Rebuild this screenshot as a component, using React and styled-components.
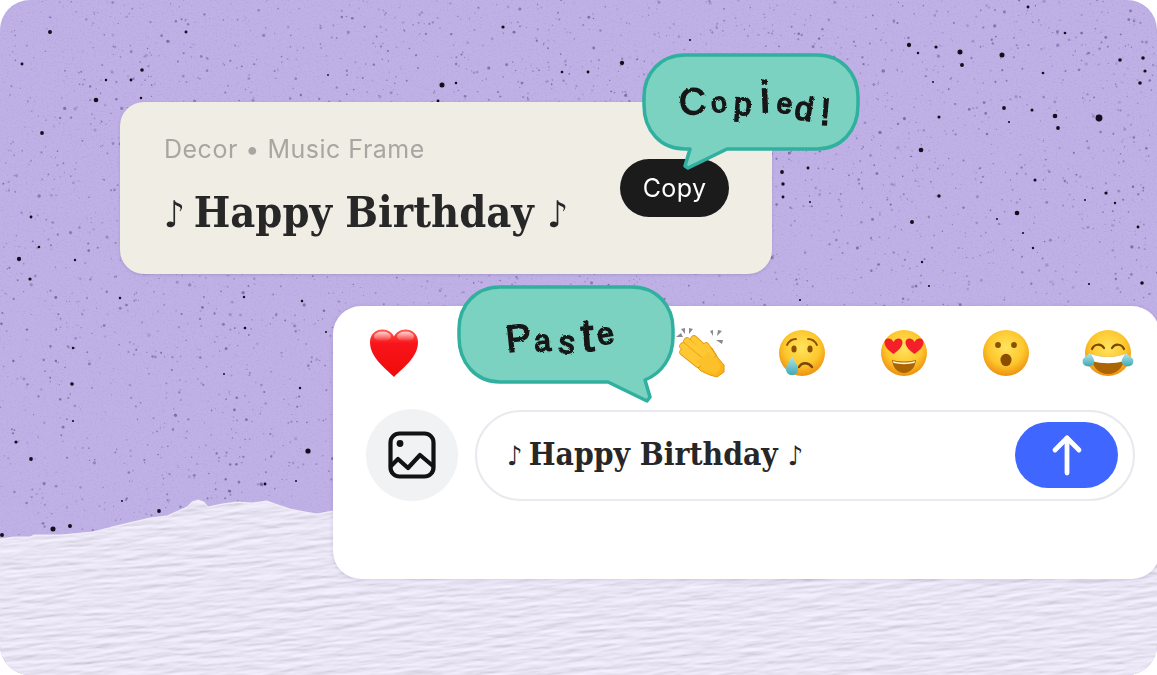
import React from "react";
import styled, { createGlobalStyle } from "styled-components";

const GlobalStyle = createGlobalStyle`
  html, body {
    margin: 0;
    padding: 0;
    background: #ffffff;
  }
`;

const TORN_EDGE =
  "M0 540 L14 538 L30 538 L34 536 L60 536 L93 533 L112 528 L133 523 L150 519 L167 517 L178 512 L187 508 L192 503 L198 501 L204 503 L208 508 L222 505 L237 503 L252 504 L267 502 L278 506 L290 510 L305 513 L317 515 L333 512 L1157 512 V675 H0 Z";

// the larger specks, read off the reference
const BIG_SPECKS = [
  [50, 32, 2.2], [22, 64, 1.6], [96, 100, 2.6], [142, 70, 2], [131, 80, 1.6], [141, 98, 1.4], [106, 80, 1.4],
  [186, 32, 1.6], [503, 27, 1.8], [442, 85, 2.8], [456, 83, 1.4], [562, 72, 1.5], [588, 72, 1.6], [328, 75, 1],
  [438, 101, 1.6], [909, 45, 2.4], [936, 47, 1.8], [960, 52, 2.8], [1002, 55, 2.8], [962, 65, 2.2], [918, 53, 1.4],
  [933, 82, 1.1], [1028, 7, 1.6], [1065, 33, 1.5], [1043, 73, 1.5], [1120, 60, 2], [1143, 58, 2], [1145, 71, 1.8],
  [1140, 83, 2], [1004, 108, 2.1], [1032, 110, 1.7], [1055, 116, 2.6], [1099, 118, 3.8], [1058, 128, 2.1],
  [939, 117, 1.7], [1009, 122, 1.2], [921, 150, 2.6], [1035, 180, 1.7], [939, 196, 1.9], [1017, 213, 2.6],
  [912, 222, 2.2], [997, 219, 1.1], [1023, 233, 1.2], [1033, 248, 1.3], [1085, 200, 1.1], [1115, 203, 1.3],
  [1106, 193, 1.8], [922, 262, 1.3], [929, 286, 1.2], [1142, 283, 2], [1089, 284, 1.2], [1138, 227, 1.6],
  [42, 133, 2.1], [19, 259, 2.4], [39, 247, 1.4], [30, 279, 1.8], [75, 260, 1.3], [31, 217, 1.6], [120, 298, 1.4],
  [73, 348, 1.4], [72, 384, 2], [16, 442, 1.8], [31, 459, 2.1], [308, 451, 2.9], [73, 421, 1.2], [244, 297, 1.3],
  [302, 301, 1.4], [245, 328, 1.5], [300, 388, 1.3], [224, 374, 1.1], [265, 484, 1.6], [159, 511, 2.1],
  [296, 481, 1.1], [326, 332, 1.1], [53, 529, 2.8], [70, 526, 2.2], [2, 535, 2.2], [122, 501, 1.1], [782, 172, 2.1],
  [808, 168, 1.6], [783, 184, 1.9], [622, 63, 2.4], [783, 197, 1.6], [810, 202, 1.1], [800, 300, 1.2], [690, 40, 1.2],
];

// small seeded generator so the grain stays the same on every load
const makeGrain = (count) => {
  let seed = 20231;
  const next = () => {
    seed = (seed * 16807) % 2147483647;
    return seed / 2147483647;
  };
  const list = [];
  for (let i = 0; i < count; i++) {
    const x = next() * 1157;
    const y = next() * 540;
    const r = 0.5 + next() * next() * 1.3;
    const o = 0.16 + next() * 0.4;
    list.push({ x, y, r, o });
  }
  return list;
};

const GRAIN = makeGrain(4200);

const Backdrop = () => (
  <BackdropSvg viewBox="0 0 1157 675" aria-hidden="true">
    <defs>
      <filter id="paper" x="-5%" y="-5%" width="110%" height="110%">
        <feTurbulence type="fractalNoise" baseFrequency="0.028 0.2" numOctaves="3" seed="7" />
        <feDiffuseLighting surfaceScale="0.85" diffuseConstant="1.13" lightingColor="#ebe7f6">
          <feDistantLight azimuth="90" elevation="60" />
        </feDiffuseLighting>
      </filter>
      <filter id="soft">
        <feGaussianBlur stdDeviation="0.5" />
      </filter>
      <filter id="mottle" x="0" y="0" width="100%" height="100%">
        <feTurbulence type="fractalNoise" baseFrequency="0.55" numOctaves="2" seed="11" />
        <feColorMatrix values="0 0 0 0 0.27  0 0 0 0 0.2  0 0 0 0 0.42  2.6 0 0 0 -1.35" />
      </filter>
      <filter id="rough" x="-10%" y="-10%" width="120%" height="120%">
        <feTurbulence type="fractalNoise" baseFrequency="0.55" numOctaves="2" seed="3" />
        <feDisplacementMap in="SourceGraphic" scale="2.6" />
      </filter>
      <clipPath id="tornClip">
        <path d={TORN_EDGE} />
      </clipPath>
    </defs>
    <rect width="1157" height="675" fill="#bfb0e6" />
    <rect width="1157" height="545" filter="url(#mottle)" opacity="0.2" />
    <g filter="url(#soft)">
      {GRAIN.map((g, i) => (
        <circle key={i} cx={g.x} cy={g.y} r={g.r} fill="#4a3570" opacity={g.o} />
      ))}
      {BIG_SPECKS.map(([x, y, r], i) => (
        <circle key={i} cx={x} cy={y} r={r * 0.9} fill="#14101c" />
      ))}
    </g>
    <path d={TORN_EDGE} fill="#efecf7" transform="translate(0 -1.5)" />
    <g clipPath="url(#tornClip)">
      <rect x="-80" y="380" width="1320" height="400" filter="url(#paper)" transform="rotate(-5 578 580)" />
    </g>
  </BackdropSvg>
);

const SpeechBubble = ({ d, $left, $top, children }) => (
  <BubbleWrap $left={$left} $top={$top}>
    <BubbleShape viewBox="0 0 220 120" aria-hidden="true">
      <path d={d} fill="#7cd2c1" stroke="#30b09e" strokeWidth="3.5" strokeLinejoin="round" />
    </BubbleShape>
    {children}
  </BubbleWrap>
);

const COPIED_SHAPE =
  "M44 2 H176 C200 2 217 20 217 44 V52 C217 78 200 96 176 96 H86 L47 115 L44 113 L49 96 H44 C20 96 3 78 3 52 V44 C3 20 20 2 44 2 Z";
const PASTE_SHAPE =
  "M44 2 H176 C200 2 217 20 217 44 V52 C217 72 206 88 189 95 L194 112 L191 116 L152 97 H44 C20 97 3 78 3 52 V44 C3 20 20 2 44 2 Z";

const COPIED_LETTERS = [
  { c: "C", size: 37, rot: -4, dy: 2, gap: 5 },
  { c: "o", size: 28, rot: -6, dy: 0, gap: 8 },
  { c: "p", size: 32, rot: 4, dy: 3, gap: 8 },
  { c: "i", size: 44, rot: -2, dy: 0, gap: 7 },
  { c: "e", size: 28, rot: 8, dy: 1, gap: 3 },
  { c: "d", size: 33, rot: 10, dy: 8, gap: 6 },
  { c: "!", size: 38, rot: 4, dy: 13, gap: 0 },
];

const PASTE_LETTERS = [
  { c: "P", size: 38, rot: -6, dy: 0, gap: 3 },
  { c: "a", size: 30, rot: -4, dy: 0, gap: 8 },
  { c: "s", size: 32, rot: 5, dy: 2, gap: 6 },
  { c: "t", size: 46, rot: -4, dy: 0, gap: 3 },
  { c: "e", size: 30, rot: -10, dy: -7, gap: 0 },
];

const HandText = ({ letters, $left, $top }) => (
  <HandLine $left={$left} $top={$top}>
    {letters.map((l, i) => (
      <HandLetter key={i} $size={l.size} $rot={l.rot} $dy={l.dy} $gap={l.gap}>
        {l.c}
      </HandLetter>
    ))}
  </HandLine>
);

const Face = ({ id, children }) => (
  <EmojiSvg viewBox="0 0 52 52" aria-hidden="true">
    <defs>
      <radialGradient id={id} cx="50%" cy="38%" r="62%">
        <stop offset="0%" stopColor="#ffe45e" />
        <stop offset="62%" stopColor="#fdc72d" />
        <stop offset="100%" stopColor="#ee8f10" />
      </radialGradient>
    </defs>
    <circle cx="26" cy="26" r="23" fill={`url(#${id})`} />
    {children}
  </EmojiSvg>
);

const Heart = () => (
  <EmojiSvg viewBox="0 0 52 52" aria-hidden="true">
    <defs>
      <linearGradient id="heartFill" x1="0" y1="0" x2="0" y2="1">
        <stop offset="0%" stopColor="#ff5a4f" />
        <stop offset="30%" stopColor="#f8141a" />
        <stop offset="100%" stopColor="#f00a0a" />
      </linearGradient>
      <linearGradient id="heartGloss" x1="0" y1="0" x2="0" y2="1">
        <stop offset="0%" stopColor="#ffffff" stopOpacity="0.75" />
        <stop offset="100%" stopColor="#ffffff" stopOpacity="0" />
      </linearGradient>
    </defs>
    <path
      d="M26 50 C16 40 2 30 2 15 C2 7 8 2.500 14.500 2.500 C20 2.500 24 5.500 26 9.500 C28 5.500 32 2.500 37.500 2.500 C44 2.500 50 7 50 15 C50 30 36 40 26 50 Z"
      fill="url(#heartFill)"
    />
    <ellipse cx="14.500" cy="9.500" rx="8.500" ry="5" fill="url(#heartGloss)" />
    <ellipse cx="37.500" cy="9.500" rx="8.500" ry="5" fill="url(#heartGloss)" />
  </EmojiSvg>
);

const CLAP_FINGERS = [
  "M9 25 L24 37",
  "M9 19 L27 34",
  "M13 14 L31 29",
  "M20 12 L35 26",
  "M32 19 L38 28",
];

const Clap = () => (
  <EmojiSvg viewBox="0 0 52 52" aria-hidden="true">
    <defs>
      <linearGradient id="clapFill" x1="0" y1="0" x2="1" y2="1">
        <stop offset="0%" stopColor="#ffd23f" />
        <stop offset="100%" stopColor="#f9b015" />
      </linearGradient>
    </defs>
    <g fill="#8a8a8e">
      <path d="M2 10 L7 6 L9 10 Z" />
      <path d="M7 2 L11 1 L11 7 Z" />
      <path d="M15 1 L19 2 L15 7 Z" />
      <path d="M36 4 L39 3 L39 9 Z" />
      <path d="M44 3 L48 4 L43 9 Z" />
      <path d="M42 13 L49 13 L48 17 Z" />
    </g>
    <path
      d="M15 32 L28 18 L38 21 L44 31 L50 38 L50 45 L43 50 L36 48 L27 44 Z"
      fill="url(#clapFill)"
      stroke="#e8950c"
      strokeWidth="1"
      strokeLinejoin="round"
    />
    <g fill="none" strokeLinecap="round" stroke="#e8950c" strokeWidth="7.400">
      {CLAP_FINGERS.map((d) => (
        <path key={d} d={d} />
      ))}
    </g>
    <g fill="none" strokeLinecap="round" stroke="#fdc834" strokeWidth="5.800">
      {CLAP_FINGERS.map((d) => (
        <path key={d} d={d} />
      ))}
    </g>
    <path d="M22 35 L35 25 L41 31 L47 40 L41 47 L31 42 Z" fill="#fcc12a" />
  </EmojiSvg>
);

const Tear = ({ id, d }) => (
  <>
    <defs>
      <linearGradient id={id} x1="0" y1="0" x2="0" y2="1">
        <stop offset="0%" stopColor="#b6e6ea" />
        <stop offset="100%" stopColor="#3fa9b5" />
      </linearGradient>
    </defs>
    <path d={d} fill={`url(#${id})`} />
  </>
);

const Crying = () => (
  <Face id="cryFace">
    <path d="M11 18 C13 14 16 12 20 12" fill="none" stroke="#8a5200" strokeWidth="1.800" strokeLinecap="round" />
    <path d="M32 12 C36 12 39 14 41 18" fill="none" stroke="#8a5200" strokeWidth="1.800" strokeLinecap="round" />
    <ellipse cx="18" cy="22" rx="2.600" ry="3.500" fill="#8a5200" />
    <ellipse cx="34" cy="22" rx="2.600" ry="3.500" fill="#8a5200" />
    <path d="M23 40 C26 35 32 35 36 40" fill="none" stroke="#7a4600" strokeWidth="2.400" strokeLinecap="round" />
    <Tear id="cryTear" d="M16 29 C18 34 22 38 22 42 C22 46 19 48 16 48 C13 48 10 46 10 42 C10 38 14 34 16 29 Z" />
  </Face>
);

const HeartEyes = () => (
  <Face id="loveFace">
    <path d="M26 46 C20 46 15 41 14 33 C22 35 30 35 38 33 C37 41 32 46 26 46 Z" fill="#a96404" />
    <path d="M15 34 C22 36 30 36 37 34 L36.500 36 C30 37.500 22 37.500 15.500 36 Z" fill="#fff6da" />
    <path
      d="M15.500 27 C11 24 7 20 6.500 16 C6.200 13 8.500 11 11 11.500 C13 11.800 14.500 13 15.500 15 C16.500 13 18 11.800 20 11.500 C22.500 11 24.800 13 24.500 16 C24 20 20 24 15.500 27 Z"
      fill="#f3202a"
    />
    <path
      d="M36.500 27 C32 24 28 20 27.500 16 C27.200 13 29.500 11 32 11.500 C34 11.800 35.500 13 36.500 15 C37.500 13 39 11.800 41 11.500 C43.500 11 45.800 13 45.500 16 C45 20 41 24 36.500 27 Z"
      fill="#f3202a"
    />
  </Face>
);

const Wow = () => (
  <Face id="wowFace">
    <circle cx="18" cy="18" r="2.900" fill="#8a5200" />
    <circle cx="34" cy="18" r="2.900" fill="#8a5200" />
    <ellipse cx="26" cy="33" rx="5.500" ry="6.200" fill="#8a4e00" />
  </Face>
);

const Laugh = () => (
  <Face id="laughFace">
    <path d="M10 22 C12 17 19 16 22 21" fill="none" stroke="#7a4600" strokeWidth="2.200" strokeLinecap="round" />
    <path d="M30 21 C33 16 40 17 42 22" fill="none" stroke="#7a4600" strokeWidth="2.200" strokeLinecap="round" />
    <path d="M9 27 C20 31 32 31 43 27 C43 39 36 47 26 47 C16 47 9 39 9 27 Z" fill="#ac6502" />
    <path d="M9 27 C20 31 32 31 43 27 L42 34 C32 37 20 37 10 34 Z" fill="#ffffff" />
    <Tear id="laughTearA" d="M8 26 C10 29 13 32 12 36 C11 39 7 40 4 39 C1 38 0 35 1 32 C3 30 6 28 8 26 Z" />
    <Tear id="laughTearB" d="M44 26 C42 29 39 32 40 36 C41 39 45 40 48 39 C51 38 52 35 51 32 C49 30 46 28 44 26 Z" />
  </Face>
);

const Smile = () => (
  <Face id="smileFace">
    <circle cx="18" cy="20" r="2.900" fill="#8a5200" />
    <circle cx="34" cy="20" r="2.900" fill="#8a5200" />
    <path d="M14 32 C20 40 32 40 38 32" fill="none" stroke="#8a5200" strokeWidth="2.400" strokeLinecap="round" />
  </Face>
);

const App = () => {
  return (
    <>
      <GlobalStyle />
      <Stage>
        <Backdrop />

        <CopyCard>
          <CardText>
            <CardLabel>Decor • Music Frame</CardLabel>
            <CardTitle>
              <Note>♪</Note> Happy Birthday <Note>♪</Note>
            </CardTitle>
          </CardText>
          <CopyButton>Copy</CopyButton>
        </CopyCard>

        <Composer>
          <EmojiRow>
            <EmojiSlot><Heart /></EmojiSlot>
            <EmojiSlot><Smile /></EmojiSlot>
            <EmojiSlot><Smile /></EmojiSlot>
            <EmojiSlot><Clap /></EmojiSlot>
            <EmojiSlot><Crying /></EmojiSlot>
            <EmojiSlot><HeartEyes /></EmojiSlot>
            <EmojiSlot><Wow /></EmojiSlot>
            <EmojiSlot><Laugh /></EmojiSlot>
          </EmojiRow>
          <InputRow>
            <ImageButton>
              <svg width="48" height="48" viewBox="0 0 48 48" fill="none" stroke="#111214" strokeWidth="4.200" strokeLinecap="round" strokeLinejoin="round">
                <rect x="2.500" y="2.500" width="43" height="43" rx="9" />
                <circle cx="12" cy="12.500" r="3.400" fill="#111214" stroke="none" />
                <path d="M3 35 L10 28 L20 37 L32 24 L45 35" />
              </svg>
            </ImageButton>
            <InputPill>
              <InputText>
                <Note>♪</Note> Happy Birthday <Note>♪</Note>
              </InputText>
              <SendButton>
                <svg width="32" height="42" viewBox="0 0 32 42" fill="none" stroke="#ffffff" strokeWidth="4.800" strokeLinecap="round" strokeLinejoin="round">
                  <path d="M16 4 V39" />
                  <path d="M4 16 L16 4 L28 16" />
                </svg>
              </SendButton>
            </InputPill>
          </InputRow>
        </Composer>

        <SpeechBubble d={COPIED_SHAPE} $left={641} $top={53}>
          <HandText letters={COPIED_LETTERS} $left={38} $top={13} />
        </SpeechBubble>
        <SpeechBubble d={PASTE_SHAPE} $left={456} $top={285}>
          <HandText letters={PASTE_LETTERS} $left={50} $top={18} />
        </SpeechBubble>
      </Stage>
    </>
  );
};

const Stage = styled.div`
  position: relative;
  width: 1157px;
  height: 675px;
  overflow: hidden;
  border-radius: 30px;
  display: flex;
  flex-direction: column;
  align-items: flex-start;
`;

const BackdropSvg = styled.svg`
  position: absolute;
  inset: 0;
  width: 1157px;
  height: 675px;
`;

const CopyCard = styled.div`
  position: relative;
  box-sizing: border-box;
  width: 652px;
  height: 172px;
  margin: 102px 0 0 120px;
  padding: 0 43px 0 44px;
  display: flex;
  align-items: center;
  justify-content: space-between;
  background: #f0ede5;
  border-radius: 24px;
  box-shadow: 0 1px 3px rgba(70, 50, 110, 0.18);
`;

const CardText = styled.div`
  display: flex;
  flex-direction: column;
  gap: 18px;
  margin-top: 1px;
`;

const CardLabel = styled.div`
  font-family: Inter, "Liberation Sans", sans-serif;
  font-size: 25px;
  line-height: 32px;
  font-weight: 400;
  letter-spacing: 0.5px;
  color: #a8a6a1;
`;

const CardTitle = styled.div`
  font-family: "DejaVu Serif", "Liberation Serif", serif;
  font-stretch: condensed;
  font-size: 43px;
  line-height: 58px;
  font-weight: 700;
  letter-spacing: 0;
  color: #272727;
  white-space: nowrap;
`;

const Note = styled.span`
  font-family: "DejaVu Sans", sans-serif;
  font-size: 0.85em;
  font-weight: 400;
  letter-spacing: -0.13em;
`;

const CopyButton = styled.div`
  display: flex;
  align-items: center;
  justify-content: center;
  width: 109px;
  height: 58px;
  border-radius: 29px;
  background: #1b1b1b;
  color: #ffffff;
  font-family: Inter, "Liberation Sans", sans-serif;
  font-size: 25px;
  letter-spacing: 0.4px;
`;

const Composer = styled.div`
  position: relative;
  flex: none;
  box-sizing: border-box;
  width: 827px;
  height: 273px;
  margin: 32px 0 0 333px;
  padding-left: 33px;
  background: #ffffff;
  border-radius: 28px;
  box-shadow: 0 1px 4px rgba(70, 50, 110, 0.16);
`;

const EmojiRow = styled.div`
  display: flex;
  align-items: center;
  height: 94px;
  margin-bottom: 9px;
  margin-left: -23px;
`;

const EmojiSlot = styled.div`
  flex: none;
  width: 102px;
  display: flex;
  justify-content: center;
`;

const EmojiSvg = styled.svg`
  display: block;
  width: 52px;
  height: 52px;
`;

const InputRow = styled.div`
  display: flex;
  align-items: center;
  gap: 17px;
`;

const ImageButton = styled.div`
  flex: none;
  width: 92px;
  height: 92px;
  border-radius: 50%;
  background: #f1f2f4;
  display: flex;
  align-items: center;
  justify-content: center;
`;

const InputPill = styled.div`
  box-sizing: border-box;
  width: 660px;
  height: 91px;
  padding: 0 15px 0 30px;
  display: flex;
  align-items: center;
  justify-content: space-between;
  border: 2px solid #e9e9ef;
  border-radius: 46px;
  background: #ffffff;
`;

const InputText = styled.div`
  margin-top: -4px;
  font-family: "DejaVu Serif", "Liberation Serif", serif;
  font-stretch: condensed;
  font-size: 31.500px;
  font-weight: 700;
  letter-spacing: 0;
  color: #272727;
  white-space: nowrap;
`;

const SendButton = styled.div`
  flex: none;
  width: 103px;
  height: 66px;
  border-radius: 33px;
  background: #3f66ff;
  display: flex;
  align-items: center;
  justify-content: center;
`;

const BubbleWrap = styled.div`
  position: absolute;
  left: ${(p) => p.$left}px;
  top: ${(p) => p.$top}px;
  width: 220px;
  height: 120px;
`;

const BubbleShape = styled.svg`
  position: absolute;
  inset: 0;
  width: 220px;
  height: 120px;
`;

const HandLine = styled.div`
  position: absolute;
  left: ${(p) => p.$left}px;
  top: ${(p) => p.$top}px;
  display: flex;
  align-items: baseline;
  filter: url(#rough);
  -webkit-text-stroke: 1.6px #141414;
`;

const HandLetter = styled.span`
  display: inline-block;
  margin-right: ${(p) => p.$gap}px;
  font-family: "Liberation Sans", sans-serif;
  font-size: ${(p) => p.$size}px;
  font-weight: 400;
  line-height: 1.4;
  color: #141414;
  transform: translateY(${(p) => p.$dy}px) rotate(${(p) => p.$rot}deg);
`;

export default App;
